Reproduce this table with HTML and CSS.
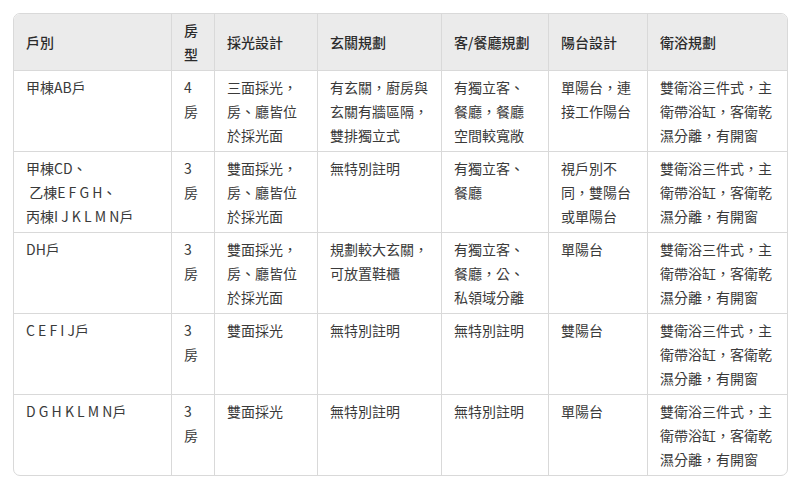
FILE: index.html
```html
<!DOCTYPE html>
<html lang="zh-Hant">
<head>
<meta charset="utf-8">
<title>戶別規劃</title>
<link rel="stylesheet" href="styles.css">
</head>
<body>
<div class="table-wrap">
  <table class="plan-table">
    <thead>
      <tr>
        <th class="c1">戶別</th>
        <th class="c2">房型</th>
        <th class="c3">採光設計</th>
        <th class="c4">玄關規劃</th>
        <th class="c5">客/餐廳規劃</th>
        <th class="c6">陽台設計</th>
        <th class="c7">衛浴規劃</th>
      </tr>
    </thead>
    <tbody>
      <tr>
        <td>甲棟AB戶</td>
        <td>4房</td>
        <td>三面採光，房、廳皆位於採光面</td>
        <td>有玄關，廚房與玄關有牆區隔，雙排獨立式</td>
        <td>有獨立客、餐廳，餐廳空間較寬敞</td>
        <td>單陽台，連接工作陽台</td>
        <td>雙衛浴三件式，主衛帶浴缸，客衛乾濕分離，有開窗</td>
      </tr>
      <tr>
        <td>甲棟CD、<br>&nbsp;乙棟E F G H、<br>丙棟I J K L M N戶</td>
        <td>3房</td>
        <td>雙面採光，房、廳皆位於採光面</td>
        <td>無特別註明</td>
        <td>有獨立客、餐廳</td>
        <td>視戶別不同，雙陽台或單陽台</td>
        <td>雙衛浴三件式，主衛帶浴缸，客衛乾濕分離，有開窗</td>
      </tr>
      <tr>
        <td>DH戶</td>
        <td>3房</td>
        <td>雙面採光，房、廳皆位於採光面</td>
        <td>規劃較大玄關，可放置鞋櫃</td>
        <td>有獨立客、餐廳，公、私領域分離</td>
        <td>單陽台</td>
        <td>雙衛浴三件式，主衛帶浴缸，客衛乾濕分離，有開窗</td>
      </tr>
      <tr>
        <td>C E F I J戶</td>
        <td>3房</td>
        <td>雙面採光</td>
        <td>無特別註明</td>
        <td>無特別註明</td>
        <td>雙陽台</td>
        <td>雙衛浴三件式，主衛帶浴缸，客衛乾濕分離，有開窗</td>
      </tr>
      <tr>
        <td>D G H K L M N戶</td>
        <td>3房</td>
        <td>雙面採光</td>
        <td>無特別註明</td>
        <td>無特別註明</td>
        <td>單陽台</td>
        <td>雙衛浴三件式，主衛帶浴缸，客衛乾濕分離，有開窗</td>
      </tr>
    </tbody>
  </table>
</div>
</body>
</html>
```

FILE: styles.css
```css
html, body {
  margin: 0;
  padding: 0;
  background: #ffffff;
}

body {
  padding: 13px;
  font-family: "Noto Sans CJK TC", "Noto Sans", sans-serif;
  font-size: 14px;
  color: #333333;
}

.table-wrap {
  width: 775px;
  box-sizing: border-box;
  border: 1px solid #d9d9d9;
  border-radius: 7px;
  overflow: hidden;
}

.plan-table {
  width: 773px;
  border-collapse: separate;
  border-spacing: 0;
  table-layout: fixed;
}

.plan-table th,
.plan-table td {
  box-sizing: border-box;
  padding: 4px 12px;
  line-height: 24px;
  text-align: left;
  border-right: 1px solid #d9d9d9;
  border-bottom: 1px solid #d9d9d9;
  word-break: normal;
}

.plan-table th:last-child,
.plan-table td:last-child {
  border-right: none;
}

.plan-table tbody tr:last-child td {
  border-bottom: none;
}

.plan-table th {
  background: #ebebeb;
  font-weight: 500;
  color: #2b2b2b;
  vertical-align: middle;
}

.plan-table td {
  vertical-align: top;
  font-weight: 400;
  color: #3a3a3a;
}

.c1 { width: 158px; }
.c2 { width: 43px; }
.c3 { width: 103px; }
.c4 { width: 124px; }
.c5 { width: 107px; }
.c6 { width: 99px; }
.c7 { width: 139px; }
```
